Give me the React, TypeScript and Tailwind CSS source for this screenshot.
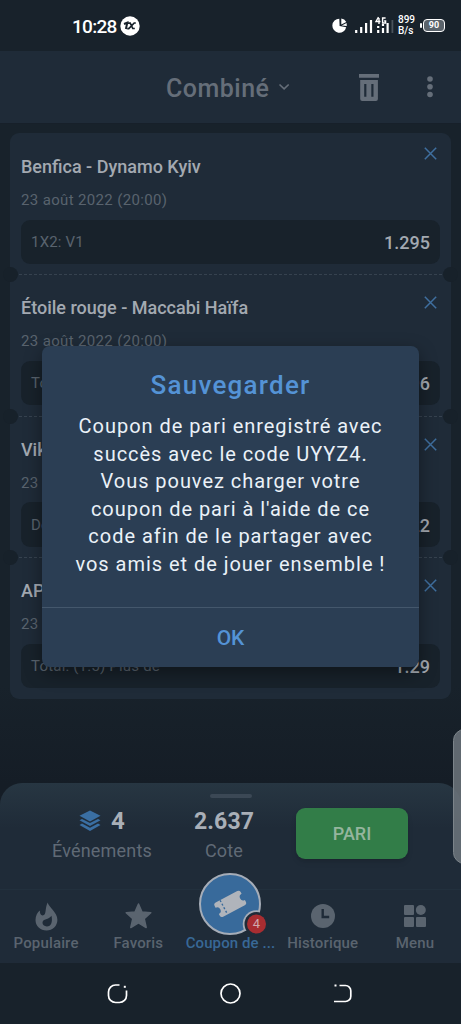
import type { ReactNode } from 'react';

interface Bet {
  teams: string;
  date: string;
  market: string;
  odds: string;
}

const bets: Bet[] = [
  { teams: 'Benfica - Dynamo Kyiv', date: '23 août 2022 (20:00)', market: '1X2: V1', odds: '1.295' },
  { teams: 'Étoile rouge - Maccabi Haïfa', date: '23 août 2022 (20:00)', market: 'Total', odds: '1.296' },
  { teams: 'Viktoria', date: '23 août', market: 'Double', odds: '1.22' },
  { teams: 'APOEL', date: '23 août', market: 'Total: (1.5) Plus de', odds: '1.29' },
];

const message = [
  'Coupon de pari enregistré avec',
  'succès avec le code UYYZ4.',
  'Vous pouvez charger votre',
  "coupon de pari à l'aide de ce",
  'code afin de le partager avec',
  'vos amis et de jouer ensemble !',
];

function StatusBar() {
  return (
    <div className="flex h-[51px] shrink-0 items-center bg-[#18222b] pl-[72px] pr-[16px] text-white">
      <span className="mt-[2px] w-[45px] whitespace-nowrap text-[19px] font-medium leading-none tracking-[-0.7px]">10:28</span>
      <svg className="ml-[3px]" width="20" height="20" viewBox="0 0 20 20">
        <circle cx="10" cy="10" r="9.7" fill="#fff" />
        <path d="m4 8 3.300-1.300L5.900 13" stroke="#18222b" strokeWidth="2" fill="none" />
        <path d="M8 7.200h2.200l2.600 5.300h2M15.800 7h-1.600l-5.400 5.600H7.200" stroke="#18222b" strokeWidth="1.700" fill="none" />
      </svg>
      <svg className="ml-auto" width="66" height="20" viewBox="0 0 66 20">
        <path d="M7.300 2.700A7 7 0 1 0 14.200 11.200L7.600 10z" fill="#fff" />
        <path d="M9.300 2.500v6l5-2.600a7 7 0 0 0-5-3.400zM9.800 9.600l5 .3-.2-2.800z" fill="#fff" />
        <path d="M24.200 17v-3M29.200 17v-6M34.100 17V7M39 17V4" stroke="#fff" strokeWidth="2.200" />
        <path d="M46.200 17v-3M46.200 12v-2M51 17v-5M51 10V8M55.600 17V7" stroke="#fff" strokeWidth="2.200" />
        <path d="M60.400 17V4" stroke="#4a535b" strokeWidth="1.800" />
        <path d="M46.500 1 44 5.500h4.500M47 2v6M53.600 2h-3v5h3V5h-1.500" stroke="#fff" strokeWidth="1.400" fill="none" />
      </svg>
      <div className="w-[18px] text-[10px] font-medium leading-[10.500px]">
        <p>899</p>
        <p>B/s</p>
      </div>
      <div className="ml-[4px] flex items-center">
        <span className="h-[5px] w-[2px] rounded-sm bg-white" />
        <span className="ml-[1px] flex h-[13px] w-[22px] items-center justify-center rounded-[4px] border-[1.500px] border-white bg-[#5a636b] text-[9px] font-bold leading-none">
          90
        </span>
      </div>
    </div>
  );
}

function Header() {
  return (
    <header className="flex h-[72px] shrink-0 items-center bg-[#1f2b38] pl-[166px] text-[#656e79]">
      <h1 className="mt-[3px] w-[104px] text-[25px] font-medium tracking-[0.500px]">Combiné</h1>
      <svg className="ml-[8px]" width="12" height="8" viewBox="0 0 12 8">
        <path d="m1.500 1.500 4.600 4.400 4.600-4.400" fill="none" stroke="currentColor" strokeWidth="1.600" />
      </svg>
      <svg className="ml-[69px] mt-[1px]" width="20" height="27" viewBox="0 0 20 27">
        <path fillRule="evenodd" fill="currentColor" d="M0 0h20v3.800H0zM1.200 6h17.700v19a2 2 0 0 1-2 2H3.200a2 2 0 0 1-2-2zM5.200 10v12.700h2.200V10zM12.300 10v12.700h2.200V10z" />
      </svg>
      <svg className="ml-[48px]" width="6" height="22" viewBox="0 0 6 22" fill="currentColor">
        <circle cx="3" cy="3" r="2.800" />
        <circle cx="3" cy="10.800" r="2.800" />
        <circle cx="3" cy="18.500" r="2.800" />
      </svg>
    </header>
  );
}

function BetRow({ bet, first }: { bet: Bet; first: boolean }) {
  return (
    <li className="relative h-[141.400px] px-[11px] pt-[22px]">
      {!first && (
        <>
          <span className="absolute left-[9px] right-[9px] top-0 h-px bg-[repeating-linear-gradient(90deg,#36424f_0_3px,transparent_3px_5px)]" />
          <span className="absolute -left-[7px] -top-[7px] size-[15px] rounded-full bg-[#17212a]" />
          <span className="absolute -right-[7px] -top-[7px] size-[15px] rounded-full bg-[#17212a]" />
        </>
      )}
      <svg className={first ? 'absolute right-[14px] top-[14px]' : 'absolute right-[14px] top-[22px]'} width="13" height="13" viewBox="0 0 13 13">
        <path d="m.8.8 11.400 11.400M12.200.8.8 12.200" stroke="#3f6f9f" strokeWidth="1.500" />
      </svg>
      <h2 className="text-[18px] font-medium leading-[24px] text-[#a3a9b1]">{bet.teams}</h2>
      <p className="mt-[11px] text-[15px] leading-[20px] tracking-[0.350px] text-[#59636e]">{bet.date}</p>
      <div className="mt-[9.500px] flex h-[44.500px] items-center justify-between rounded-[9px] bg-[#18222b] px-[10px]">
        <span className="mt-[1px] text-[15px] tracking-[0.200px] text-[#59636e]">{bet.market}</span>
        <span className="mt-[1px] text-[18px] font-medium text-[#a3a9b1]">{bet.odds}</span>
      </div>
    </li>
  );
}

function Summary() {
  return (
    <section className="flex h-[106px] flex-col">
      <span className="mx-auto mt-[11px] h-[3.500px] w-[42px] rounded-full bg-[#3b4855]" />
      <div className="flex flex-1 items-start pl-[42px]">
        <div className="mt-[9px] flex w-[120px] flex-col items-center">
          <div className="flex h-[28px] items-center gap-[10px]">
            <svg width="22" height="22" viewBox="0 0 22 22" fill="#3a6fa3">
              <path d="m11 .5 10.500 5.300L11 11.500.5 5.800z" />
              <path d="m.5 10.300 2.500-1.400 8 4.200 8-4.200 2.500 1.400L11 16z" />
              <path d="m.5 15 2.500-1.400 8 4.200 8-4.200 2.500 1.400L11 21z" />
            </svg>
            <span className="text-[24px] font-bold text-[#a9afb7]">4</span>
          </div>
          <p className="mt-[4px] text-[18px] leading-[24px] tracking-[0.200px] text-[#606a76]">Événements</p>
        </div>
        <div className="mt-[9px] flex w-[124px] flex-col items-center">
          <p className="pt-[1px] text-[23px] font-bold leading-[27px] tracking-[0.100px] text-[#a9afb7]">2.637</p>
          <p className="mt-[4px] text-[18px] leading-[24px] tracking-[0.200px] text-[#606a76]">Cote</p>
        </div>
        <button className="ml-[10px] mt-[10px] h-[51px] w-[112px] rounded-[9px] bg-[#327d48] pt-[1px] text-[18px] font-medium text-[#95b59e] shadow-md">
          PARI
        </button>
      </div>
    </section>
  );
}

function Tab({ label, children }: { label: string; children: ReactNode }) {
  return (
    <div className="flex flex-1 flex-col items-center text-[#5a646f]">
      <div className="flex h-[28px] items-center justify-center pl-px">{children}</div>
      <span className="mt-[1px] whitespace-nowrap text-[15px] font-medium leading-[24px] tracking-[0.150px]">{label}</span>
    </div>
  );
}

function CouponTab() {
  return (
    <div className="relative flex flex-1 flex-col items-center pt-[29px]">
      <svg className="absolute -top-[31px] left-[7px]" width="78" height="66" viewBox="0 0 78 66">
        <defs>
          <clipPath id="couponDisc">
            <circle cx="39" cy="33" r="31" />
          </clipPath>
        </defs>
        <circle cx="39" cy="33" r="30" fill="#386a9b" stroke="#a6adb8" strokeWidth="2" />
        <g clipPath="url(#couponDisc)">
          <circle cx="65.500" cy="53" r="13.800" fill="#a6adb8" />
        </g>
        <circle cx="65.500" cy="53" r="12" fill="#1f2b38" />
        <circle cx="65.500" cy="53" r="9.500" fill="#a82d31" />
        <g transform="rotate(-28 39 33)">
          <path
            fill="#b0b4bb"
            d="M27 25h24.500a2.500 2.500 0 0 1 2.500 2.500v2a3.500 3.500 0 0 0 0 7v2a2.500 2.500 0 0 1-2.500 2.500H27a2.500 2.500 0 0 1-2.500-2.500v-2a3.500 3.500 0 0 0 0-7v-2A2.500 2.500 0 0 1 27 25z"
          />
          <path d="M32 25v16" stroke="#386a9b" strokeWidth="1.400" strokeDasharray="2 2" />
        </g>
      </svg>
      <span className="absolute left-[65px] top-[14px] w-[14px] text-center text-[13px] leading-[16px] text-[#d0a9ad]">4</span>
      <span className="whitespace-nowrap text-[15px] font-medium leading-[24px] tracking-[0.100px] text-[#386896]">Coupon de ...</span>
    </div>
  );
}

function TabBar() {
  return (
    <nav className="flex h-[74px] border-t border-[#22303d] pt-[12px]">
      <Tab label="Populaire">
        <svg width="23" height="29" viewBox="0 0 23 29">
          <path fill="currentColor" d="M12.700.5c.8 4.600 9.700 9.700 9.700 17.200 0 6.300-4.800 10.800-10.900 10.800S.5 24.100.5 18c0-4.200 2-7.700 4.400-9.400-.2 2.800.8 4.800 2.700 4.800 4.300 0 2-7.200 5.100-12.900z" />
          <path fill="#1f2b38" d="M16.500 13.800c1.300 6.200-.3 10.700-4.600 10.700-2.700 0-4.600-1.700-4.400-3.900.4-4.100 6.200-2.600 9-6.800z" />
        </svg>
      </Tab>
      <Tab label="Favoris">
        <svg width="27" height="26" viewBox="0 0 27 26">
          <path fill="currentColor" stroke="currentColor" strokeWidth="1.500" strokeLinejoin="round" d="m13.500 1 3.500 8 8.800.8-6.600 5.800 2 8.900-7.700-4.600-7.700 4.600 2-8.900L1.200 9.800 10 9z" />
        </svg>
      </Tab>
      <CouponTab />
      <Tab label="Historique">
        <svg width="24" height="24" viewBox="0 0 24 24">
          <circle cx="12" cy="12" r="12" fill="currentColor" />
          <path d="M11.700 5v8h6.500" fill="none" stroke="#1f2b38" strokeWidth="2.400" />
        </svg>
      </Tab>
      <Tab label="Menu">
        <svg width="22" height="22" viewBox="0 0 22 22" fill="currentColor">
          <rect width="10" height="10" rx="1" />
          <circle cx="16.800" cy="5" r="5" />
          <rect y="12" width="10" height="10" rx="1" />
          <rect x="12" y="12" width="10" height="10" rx="1" />
        </svg>
      </Tab>
    </nav>
  );
}

function SystemNav() {
  return (
    <div className="flex h-[61px] items-center justify-center gap-[92px] bg-[#18222b]">
      <svg width="21" height="21" viewBox="0 0 21 21" fill="none" stroke="#fff" strokeWidth="1.700">
        <path d="M12.500 2H8.500a7 7 0 0 0-7 7v3.500a7 7 0 0 0 7 7H12.500a7 7 0 0 0 7-7V7.500" />
        <path d="M16.800 3.800h2" strokeWidth="2" />
      </svg>
      <svg width="21" height="21" viewBox="0 0 21 21" fill="none" stroke="#fff" strokeWidth="1.700">
        <circle cx="10.500" cy="10.500" r="9.500" />
      </svg>
      <svg width="21" height="21" viewBox="0 0 21 21" fill="none" stroke="#fff" strokeWidth="1.700">
        <path d="M6.500 2.500h6a5.300 5.300 0 0 1 5.300 5.300v5.400a5.300 5.300 0 0 1-5.300 5.300H1" />
        <path d="M1.500 2.500h2" strokeWidth="2" />
      </svg>
    </div>
  );
}

function SaveDialog() {
  return (
    <div
      role="dialog"
      className="absolute left-[42px] top-[346px] flex h-[321px] w-[377px] flex-col rounded-[8px] bg-[#2b3e54] text-center shadow-[0_6px_18px_rgba(0,0,0,0.4)]"
    >
      <h2 className="mt-[23px] text-[26px] font-medium leading-[32px] tracking-[1.250px] text-[#5493d6]">Sauvegarder</h2>
      <div className="mt-[12px] text-[20px] leading-[27.500px] tracking-[0.960px] text-[#eaf1f8]">
        {message.map((line) => (
          <p key={line} className="whitespace-nowrap">
            {line}
          </p>
        ))}
      </div>
      <button className="mt-auto h-[60px] border-t border-[#44576c] pt-[2px] text-[21px] font-medium text-[#5493d6]">OK</button>
    </div>
  );
}

export default function App() {
  return (
    <div className="relative flex h-[1024px] w-[461px] flex-col overflow-hidden bg-[#18222b] font-[Roboto,sans-serif]">
      <StatusBar />
      <Header />
      <main className="flex-1 border-t border-[#17202a] bg-linear-to-b from-[#18222b] from-85% to-[#151d26] px-[10px] pt-[9px]">
        <ul className="rounded-[9px] bg-[#1f2b38]">
          {bets.map((bet, index) => (
            <BetRow key={bet.teams} bet={bet} first={index === 0} />
          ))}
        </ul>
      </main>
      <div className="bg-[#151d26]">
        <div className="rounded-t-[22px] bg-linear-to-b from-[#273642] to-[#1f2b38] to-25%">
          <Summary />
          <TabBar />
        </div>
      </div>
      <SystemNav />
      <SaveDialog />
      <div className="absolute -right-[15px] top-[729px] h-[135px] w-[23px] rounded-[14px] border border-[#7b8389] bg-[#6d757c]/85" />
    </div>
  );
}
